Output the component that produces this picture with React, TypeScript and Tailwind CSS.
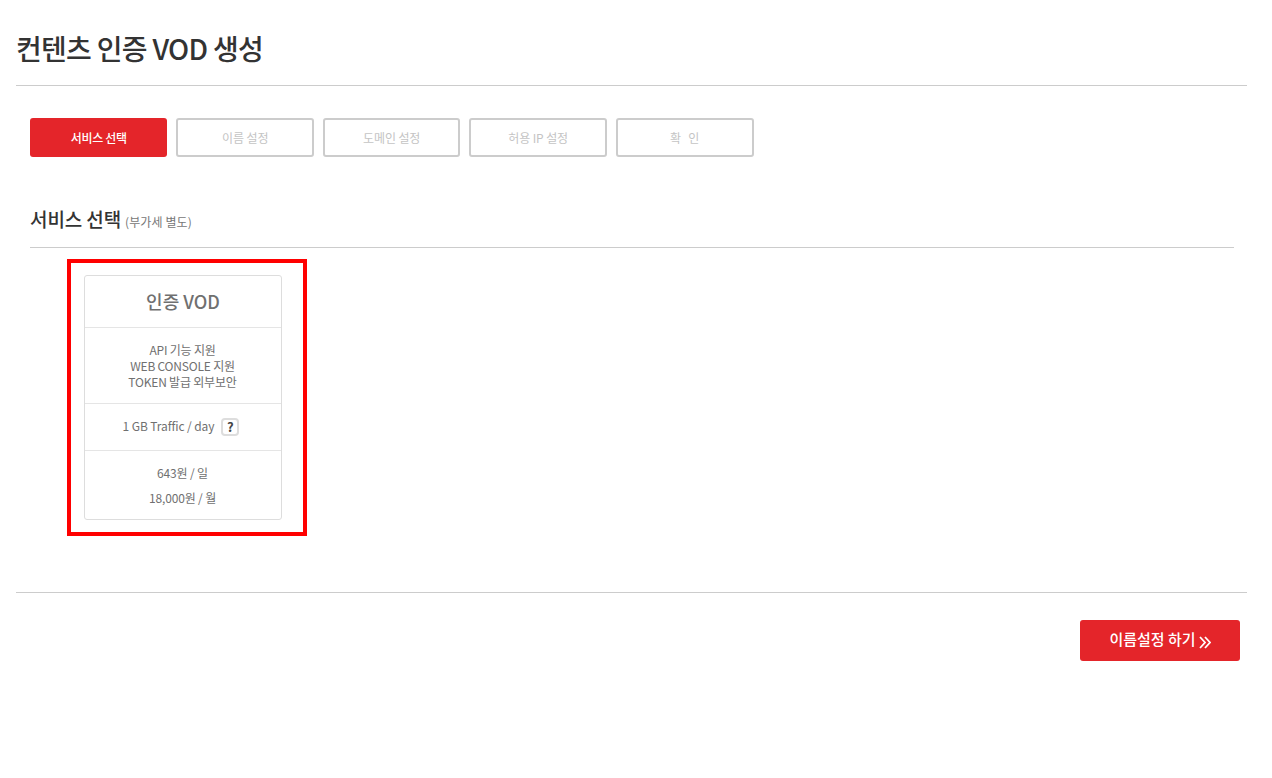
const font = { fontFamily: '"Noto Sans CJK KR", "Noto Sans", sans-serif' };

const steps = ["서비스 선택", "이름 설정", "도메인 설정", "허용 IP 설정", "확  인"];

export default function App() {
  return (
    <div className="min-h-[778px] bg-white px-4 text-[#333]" style={font}>
      <div className="w-[1231px]">
        <h1 className="flex h-[85px] items-end pb-[17px] text-[28px] leading-[40px] font-medium tracking-[-0.7px] text-[#333]">
          컨텐츠 인증 VOD 생성
        </h1>
        <div className="h-px bg-[#ccc]" />

        <div className="px-3.5">
          <div className="mt-8 flex gap-[9px]">
            {steps.map((s, i) => (
              <div
                key={s}
                className={
                  i === 0
                    ? "flex h-[39px] w-[137.47px] items-center justify-center rounded-[3px] bg-[#e4252a] text-xs font-medium tracking-[-0.3px] text-white"
                    : i === 4
                      ? "flex h-[39px] w-[138px] items-center justify-center rounded-[3px] border-2 border-[#ccc] bg-white text-xs tracking-[0.6px] text-[#c4c4c4] whitespace-pre"
                      : "flex h-[39px] w-[137.47px] items-center justify-center rounded-[3px] border-2 border-[#ccc] bg-white text-xs tracking-[-0.1px] text-[#c4c4c4] whitespace-pre"
                }
              >
                {s}
              </div>
            ))}
          </div>

          <div className="mt-[45px] flex h-[46px] w-[1204px] items-start border-b border-[#ccc]">
            <span className="text-[19px] leading-[34px] font-medium tracking-[-0.1px] text-[#333]">서비스 선택</span>
            <span className="ml-[4px] pt-[9px] text-xs leading-[22px] tracking-[0.1px] text-[#777]">(부가세 별도)</span>
          </div>

          <div className="mt-[11px] ml-[37px] h-[277px] w-[240px] border-4 border-[#f00] px-[13px] pt-3">
            <div className="h-[245px] w-[198px] rounded-[3px] border border-[#ddd] text-center text-[#707070]">
              <div className="flex h-[52px] items-center justify-center border-b border-[#e5e5e5] text-[18px] font-medium text-[#707070]">
                인증 VOD
              </div>
              <div className="flex h-[76px] flex-col justify-center border-b border-[#e5e5e5] pt-[1px] pr-[1px] text-xs leading-4 tracking-[-0.2px]">
                <div>API 기능 지원</div>
                <div>WEB CONSOLE 지원</div>
                <div>TOKEN 발급 외부보안</div>
              </div>
              <div className="flex h-[47px] items-center justify-center border-b border-[#e5e5e5] pr-[4px] pb-[1px] text-xs tracking-[-0.1px]">
                <span className="mb-[2px]">1 GB Traffic / day</span>
                <span className="ml-[7px] flex h-[18px] w-[18px] items-center justify-center rounded-[4px] border-2 border-[#ddd] bg-white text-[13px] font-bold text-[#444]">
                  ?
                </span>
              </div>
              <div className="pt-[13px] pr-[1px] text-xs tracking-[-0.15px]">
                <div className="leading-[18px]">643원 / 일</div>
                <div className="mt-[7px] leading-[18px]">18,000원 / 월</div>
              </div>
            </div>
          </div>
        </div>

        <div className="mt-14 h-px bg-[#ccc]" />

        <div className="mt-[27px] flex justify-end pr-[7px]">
          <button className="flex h-[41px] w-[160px] items-center justify-center rounded-[3px] bg-[#e4252a] pb-[2px] text-[15px] font-medium text-white">
            이름설정 하기
            <svg className="ml-[3px] mt-[5px]" width="12" height="13" viewBox="0 0 12 13" fill="none" stroke="#fff" strokeWidth="1.8">
              <path d="M1 1l5 5.5-5 5.5" />
              <path d="M6 1l5 5.5-5 5.5" />
            </svg>
          </button>
        </div>
      </div>
    </div>
  );
}
